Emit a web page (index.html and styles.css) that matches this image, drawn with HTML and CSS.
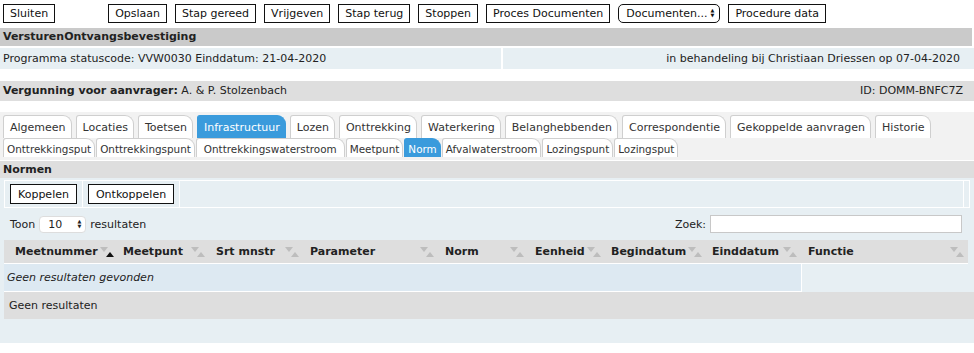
FILE: index.html
```html
<!DOCTYPE html>
<html lang="nl">
<head>
    <meta charset="UTF-8">
    <title>VersturenOntvangsbevestiging</title>
    <link rel="stylesheet" href="styles.css">
</head>
<body>
    <!-- Actie knoppen -->
    <div class="actions">
        <button class="btn">Sluiten</button>
        <button class="btn gap-left">Opslaan</button>
        <button class="btn">Stap gereed</button>
        <button class="btn">Vrijgeven</button>
        <button class="btn">Stap terug</button>
        <button class="btn">Stoppen</button>
        <button class="btn">Proces Documenten</button>
        <span class="select-btn">Documenten... <span class="arrows">&#9650;<br>&#9660;</span></span>
        <button class="btn">Procedure data</button>
    </div>

    <div class="title-row">VersturenOntvangsbevestiging</div>
    <div class="status-row">
        <div class="status-left">Programma statuscode: VVW0030 Einddatum: 21-04-2020</div>
        <div class="status-right">in behandeling bij Christiaan Driessen op 07-04-2020</div>
    </div>

    <div class="applicant-row">
        <div><b>Vergunning voor aanvrager:</b> A. &amp; P. Stolzenbach</div>
        <div>ID: DOMM-BNFC7Z</div>
    </div>

    <!-- Tabbladen -->
    <div class="tabbar">
        <div class="tabs">
            <span class="tab">Algemeen</span>
            <span class="tab">Locaties</span>
            <span class="tab">Toetsen</span>
            <span class="tab active">Infrastructuur</span>
            <span class="tab">Lozen</span>
            <span class="tab">Onttrekking</span>
            <span class="tab">Waterkering</span>
            <span class="tab">Belanghebbenden</span>
            <span class="tab">Correspondentie</span>
            <span class="tab">Gekoppelde aanvragen</span>
            <span class="tab">Historie</span>
        </div>
        <div class="tabs subtabs">
            <span class="tab">Onttrekkingsput</span>
            <span class="tab">Onttrekkingspunt</span>
            <span class="tab wide">Onttrekkingswaterstroom</span>
            <span class="tab">Meetpunt</span>
            <span class="tab active">Norm</span>
            <span class="tab">Afvalwaterstroom</span>
            <span class="tab">Lozingspunt</span>
            <span class="tab">Lozingsput</span>
        </div>
    </div>

    <div class="section-title">Normen</div>
    <div class="panel">
        <div class="panel-tools">
            <div class="tool-cell"><button class="btn">Koppelen</button></div>
            <div class="tool-cell"><button class="btn">Ontkoppelen</button></div>
            <div class="tool-cell grow"></div>
            <div class="tool-cell end"></div>
        </div>

        <div class="list-controls">
            <div class="length">Toon <span class="length-select">10 <span class="arrows">&#9650;<br>&#9660;</span></span> resultaten</div>
            <div class="search">Zoek: <span class="search-input"></span></div>
        </div>

        <table class="grid">
            <colgroup>
                <col style="width:112px"><col style="width:93px"><col style="width:94px">
                <col style="width:135px"><col style="width:90px"><col style="width:76px">
                <col style="width:101px"><col style="width:96px"><col style="width:167px">
            </colgroup>
            <thead>
                <tr>
                    <th class="first"><div class="th-in"><span>Meetnummer</span><svg class="sort" width="14" height="10" viewBox="0 0 14 10"><polygon points="0,0 8,0 4,5" fill="#bdbdbd"/><polygon points="6,10 14,10 10,5" fill="#111"/></svg></div></th>
                    <th><div class="th-in"><span>Meetpunt</span><svg class="sort" width="14" height="10" viewBox="0 0 14 10"><polygon points="0,0 8,0 4,5" fill="#bdbdbd"/><polygon points="6,10 14,10 10,5" fill="#bdbdbd"/></svg></div></th>
                    <th><div class="th-in"><span>Srt mnstr</span><svg class="sort" width="14" height="10" viewBox="0 0 14 10"><polygon points="0,0 8,0 4,5" fill="#bdbdbd"/><polygon points="6,10 14,10 10,5" fill="#bdbdbd"/></svg></div></th>
                    <th><div class="th-in"><span>Parameter</span><svg class="sort" width="14" height="10" viewBox="0 0 14 10"><polygon points="0,0 8,0 4,5" fill="#bdbdbd"/><polygon points="6,10 14,10 10,5" fill="#bdbdbd"/></svg></div></th>
                    <th><div class="th-in"><span>Norm</span><svg class="sort" width="14" height="10" viewBox="0 0 14 10"><polygon points="0,0 8,0 4,5" fill="#bdbdbd"/><polygon points="6,10 14,10 10,5" fill="#bdbdbd"/></svg></div></th>
                    <th><div class="th-in"><span>Eenheid</span><svg class="sort" width="14" height="10" viewBox="0 0 14 10"><polygon points="0,0 8,0 4,5" fill="#bdbdbd"/><polygon points="6,10 14,10 10,5" fill="#bdbdbd"/></svg></div></th>
                    <th><div class="th-in"><span>Begindatum</span><svg class="sort" width="14" height="10" viewBox="0 0 14 10"><polygon points="0,0 8,0 4,5" fill="#bdbdbd"/><polygon points="6,10 14,10 10,5" fill="#bdbdbd"/></svg></div></th>
                    <th><div class="th-in"><span>Einddatum</span><svg class="sort" width="14" height="10" viewBox="0 0 14 10"><polygon points="0,0 8,0 4,5" fill="#bdbdbd"/><polygon points="6,10 14,10 10,5" fill="#bdbdbd"/></svg></div></th>
                    <th><div class="th-in"><span>Functie</span><svg class="sort" width="14" height="10" viewBox="0 0 14 10"><polygon points="0,0 8,0 4,5" fill="#bdbdbd"/><polygon points="6,10 14,10 10,5" fill="#bdbdbd"/></svg></div></th>
                </tr>
            </thead>
            <tbody>
                <tr>
                    <td colspan="8" class="empty">Geen resultaten gevonden</td>
                    <td class="filler"></td>
                </tr>
            </tbody>
        </table>
        <div class="info">Geen resultaten</div>
    </div>
</body>
</html>
```

FILE: styles.css
```css
body {
    margin: 0;
    font-family: "DejaVu Sans", Verdana, sans-serif;
    font-size: 11px;
    color: #222;
    background: #fff;
}
b {
    font-weight: bold;
}

/* Knoppenbalk */
.actions {
    display: flex;
    align-items: center;
    gap: 8px;
    padding: 3px 3px 0 3px;
    height: 20px;
}
.btn {
    font-family: inherit;
    font-size: 11px;
    color: #111;
    background: #fff;
    border: 1px solid #111;
    border-radius: 0;
    height: 19px;
    padding: 0 6px;
    margin: 0;
    cursor: pointer;
}
.gap-left {
    margin-left: 45px;
}
.select-btn {
    display: flex;
    align-items: center;
    gap: 3px;
    height: 19px;
    box-sizing: border-box;
    border: 1px solid #111;
    border-radius: 5px;
    padding: 0 5px 0 7px;
    color: #111;
}
.arrows {
    display: inline-block;
    font-size: 5px;
    line-height: 5px;
    text-align: center;
}

/* Kop */
.title-row {
    margin-top: 5px;
    background: #cacaca;
    font-weight: bold;
    height: 18px;
    line-height: 18px;
    padding-left: 3px;
    margin-right: 2px;
}
.status-row {
    display: flex;
    gap: 2px;
    margin-top: 2px;
    height: 21px;
    line-height: 21px;
}
.status-left {
    width: 498px;
    padding-left: 3px;
    background: #e7eff3;
}
.status-right {
    flex: 1;
    background: #e7eff3;
    text-align: right;
    padding-right: 14px;
}
.applicant-row {
    display: flex;
    justify-content: space-between;
    margin-top: 12px;
    background: #dedede;
    height: 20px;
    line-height: 20px;
    padding: 0 11px 0 3px;
}

/* Tabbladen */
.tabbar {
    margin-top: 11px;
    background: #f2f2f2;
    padding: 3px 0 3px 3px;
}
.tabs {
    display: flex;
    gap: 4px;
}
.tab {
    display: inline-block;
    white-space: nowrap;
    background: #fff;
    color: #333;
    border: 1px solid #cfcfcf;
    border-bottom: none;
    border-radius: 3px 9px 0 0;
    height: 23px;
    line-height: 24px;
    padding: 0 5px 0 6px;
    font-size: 11px;
    box-sizing: border-box;
}
.tab.active {
    background: #3a9bdc;
    border-color: #3a9bdc;
    color: #fff;
}
.subtabs {
    gap: 1px;
}
.subtabs .tab {
    height: 19px;
    line-height: 20px;
    padding: 0 3px 0 3px;
    font-size: 10.4px;
}
.subtabs .tab.wide {
    padding: 0 7px;
}

/* Normen */
.section-title {
    margin-top: 1px;
    background: #dedede;
    font-weight: bold;
    height: 17px;
    line-height: 17px;
    padding-left: 3px;
}
.panel {
    background: #e7eff3;
    padding: 2px 0 24px 4px;
}
.panel-tools {
    display: flex;
    height: 26px;
    border-top: 1px solid #fff;
    border-bottom: 1px solid #fff;
    margin-right: 4px;
}
.tool-cell {
    display: flex;
    align-items: center;
    padding: 0 5px;
    border-left: 1px solid #fff;
}
.tool-cell .btn {
    height: 20px;
    padding: 0 7px;
}
.tool-cell.grow {
    flex: 1;
}
.tool-cell.end {
    width: 5px;
    padding: 0;
    border-right: 1px solid #fff;
}
.list-controls {
    display: flex;
    justify-content: space-between;
    align-items: center;
    height: 32px;
    padding: 0 12px 0 6px;
}
.length {
    display: flex;
    align-items: center;
    gap: 4px;
}
.length-select {
    display: inline-flex;
    align-items: center;
    justify-content: space-between;
    width: 33px;
    height: 15px;
    padding: 0 4px 0 8px;
    background: #fff;
    border: 1px solid #ddd;
    border-radius: 4px;
}
.search {
    display: flex;
    align-items: center;
    gap: 4px;
}
.search-input {
    display: inline-block;
    width: 250px;
    height: 16px;
    background: #fff;
    border: 1px solid #c8c8c8;
}

/* Tabel */
.grid {
    border-collapse: collapse;
    table-layout: fixed;
    width: 964px;
}
.grid th {
    background: #dedede;
    height: 23px;
    padding: 0 4px 0 7px;
    text-align: left;
    font-weight: bold;
    white-space: nowrap;
    overflow: hidden;
}
.grid th.first {
    padding-left: 11px;
}
.th-in {
    display: flex;
    align-items: center;
    justify-content: space-between;
    gap: 2px;
}
.grid th .sort {
    flex: none;
    margin-top: 1px;
}
.grid td {
    height: 27px;
    padding: 0 3px;
    border-top: 1px solid #fff;
    border-bottom: 1px solid #fff;
}
.grid td.empty {
    background: #dde9f2;
    font-style: italic;
    border-right: 1px solid #fff;
}
.grid td.filler {
    background: #e7eff3;
    border-bottom: none;
}
.info {
    background: #dedede;
    height: 27px;
    line-height: 27px;
    padding-left: 5px;
}
```
